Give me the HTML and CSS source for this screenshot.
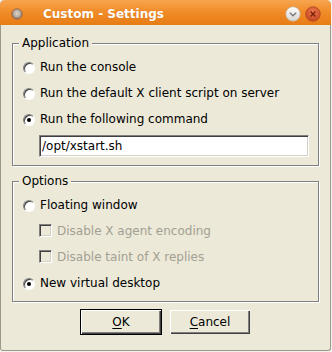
FILE: index.html
```html
<!DOCTYPE html>
<html lang="en">
<head>
    <meta charset="UTF-8">
    <title>Custom - Settings</title>
    <link rel="stylesheet" href="styles.css">
</head>
<body>

    <div class="window">
        <!-- Title bar -->
        <div class="titlebar">
            <svg class="titlebar__icon" width="12" height="12" viewBox="0 0 12 12">
                <defs>
                    <radialGradient id="appDot" cx="50%" cy="45%" r="55%">
                        <stop offset="0" stop-color="#dcd6cf"/>
                        <stop offset="0.55" stop-color="#b9aea3"/>
                        <stop offset="1" stop-color="#8a6248"/>
                    </radialGradient>
                </defs>
                <circle cx="6" cy="6" r="5.3" fill="url(#appDot)" stroke="#9a6a4a" stroke-width="0.8"/>
            </svg>
            <span class="titlebar__text">Custom - Settings</span>
            <div class="titlebar__buttons">
                <svg width="16" height="16" viewBox="0 0 16 16">
                    <defs>
                        <linearGradient id="minGrad" x1="0" y1="0" x2="0" y2="1">
                            <stop offset="0" stop-color="#ffffff"/>
                            <stop offset="1" stop-color="#d6d4d0"/>
                        </linearGradient>
                    </defs>
                    <circle cx="8" cy="8" r="7.3" fill="url(#minGrad)" stroke="#c9a57e" stroke-width="0.8"/>
                    <polyline points="4.8,6.8 8,9.8 11.2,6.8" fill="none" stroke="#7a7a7a" stroke-width="1.4"/>
                </svg>
                <svg width="16" height="16" viewBox="0 0 16 16">
                    <defs>
                        <radialGradient id="closeGrad" cx="50%" cy="35%" r="65%">
                            <stop offset="0" stop-color="#ee7a4e"/>
                            <stop offset="1" stop-color="#c4441f"/>
                        </radialGradient>
                    </defs>
                    <circle cx="8" cy="8" r="7.3" fill="url(#closeGrad)" stroke="#b34a22" stroke-width="0.8"/>
                    <path d="M5.6 5.6 L10.4 10.4 M10.4 5.6 L5.6 10.4" stroke="#7a2208" stroke-width="1.4"/>
                </svg>
            </div>
        </div>

        <div class="panel">
            <fieldset class="group">
                <legend class="group__title">Application</legend>
                <label class="choice"><span class="radio"></span>Run the console</label>
                <label class="choice"><span class="radio"></span>Run the default X client script on server</label>
                <label class="choice"><span class="radio radio--on"></span>Run the following command</label>
                <input class="field" type="text" value="/opt/xstart.sh">
            </fieldset>

            <fieldset class="group group--options">
                <legend class="group__title">Options</legend>
                <label class="choice"><span class="radio"></span>Floating window</label>
                <label class="choice choice--sub is-disabled"><span class="check"></span>Disable X agent encoding</label>
                <label class="choice choice--sub is-disabled"><span class="check"></span>Disable taint of X replies</label>
                <label class="choice"><span class="radio radio--on"></span>New virtual desktop</label>
            </fieldset>

            <div class="actions">
                <button class="btn btn--default"><u>O</u>K</button>
                <button class="btn"><u>C</u>ancel</button>
            </div>
        </div>
    </div>

</body>
</html>
```

FILE: styles.css
```css
body {
    margin: 0;
    padding: 0;
    background-color: #f2f1ee;
    font-family: "DejaVu Sans", Verdana, sans-serif;
    font-size: 12px;
    color: #000;
}

.window {
    width: 331px;
    box-sizing: border-box;
    background-color: #ece9d8;
    border: 1px solid #9c998a;
    border-top: none;
    border-radius: 5px 5px 3px 3px;
}

/* Title bar */
.titlebar {
    height: 25px;
    margin: 0 -1px;
    display: flex;
    align-items: center;
    padding: 0 10px 0 11px;
    background: linear-gradient(#f7a54f, #f18d2a 45%, #e77c14);
    border-radius: 5px 5px 0 0;
}

.titlebar__icon {
    display: block;
    margin-top: 2px;
}

.titlebar__text {
    margin-left: 20px;
    padding-top: 2px;
    color: #fff;
    font-weight: bold;
    font-size: 12px;
    text-shadow: 0 0 1px rgba(120, 60, 0, 0.25);
}

.titlebar__buttons {
    margin-left: auto;
    display: flex;
    gap: 4px;
    margin-top: 2px;
}

.titlebar__buttons svg {
    display: block;
}

/* Content */
.panel {
    padding: 11px 11px 16px;
}

.group {
    margin: 0;
    padding: 4px 10px 8px;
    min-inline-size: 0;
    border: 1px solid #808080;
    box-shadow: inset 1px 1px 0 #fff, 1px 1px 0 #fff;
}

.group--options {
    margin-top: 8px;
    padding-bottom: 5px;
}

.group__title {
    margin-left: -4px;
    padding: 0 3px;
    line-height: 14px;
    background-color: #ece9d8;
}

.choice {
    display: flex;
    align-items: center;
    gap: 5px;
    height: 26px;
    line-height: 14px;
    white-space: nowrap;
}

.choice--sub {
    padding-left: 16px;
}

.is-disabled {
    color: #a3a093;
}

.radio {
    width: 12px;
    height: 12px;
    box-sizing: border-box;
    margin-top: 2px;
    border-radius: 50%;
    border: 1px solid;
    border-color: #808080 #fff #fff #808080;
    background-color: #fff;
    box-shadow: inset 1px 1px 0 #404040;
    display: flex;
    align-items: center;
    justify-content: center;
}

.radio--on::after {
    content: "";
    width: 4px;
    height: 4px;
    border-radius: 50%;
    background-color: #000;
}

.check {
    width: 13px;
    height: 13px;
    box-sizing: border-box;
    margin-bottom: 2px;
    border: 1px solid;
    border-color: #808080 #fff #fff #808080;
    box-shadow: inset 1px 1px 0 #404040, inset -1px -1px 0 #d4d0c8;
}

.field {
    display: block;
    width: 270px;
    height: 22px;
    box-sizing: border-box;
    margin: 3px 0 0 16px;
    padding: 0 2px;
    font-family: "DejaVu Sans", Verdana, sans-serif;
    font-size: 12px;
    color: #000;
    background-color: #fff;
    border: 1px solid;
    border-color: #808080 #fff #fff #808080;
    box-shadow: inset 1px 1px 0 #404040, inset -1px -1px 0 #d4d0c8;
    outline: none;
}

/* Buttons */
.actions {
    display: flex;
    justify-content: center;
    gap: 9px;
    padding-top: 8px;
}

.btn {
    width: 80px;
    height: 24px;
    padding: 0;
    font-family: "DejaVu Sans", Verdana, sans-serif;
    font-size: 12px;
    color: #000;
    background-color: #ece9d8;
    border: none;
    box-shadow: inset 1px 1px 0 #fff, inset -1px -1px 0 #404040, inset -2px -2px 0 #808080;
}

.btn u {
    text-underline-offset: 2px;
}

.btn--default {
    outline: 1px solid #000;
}
```
